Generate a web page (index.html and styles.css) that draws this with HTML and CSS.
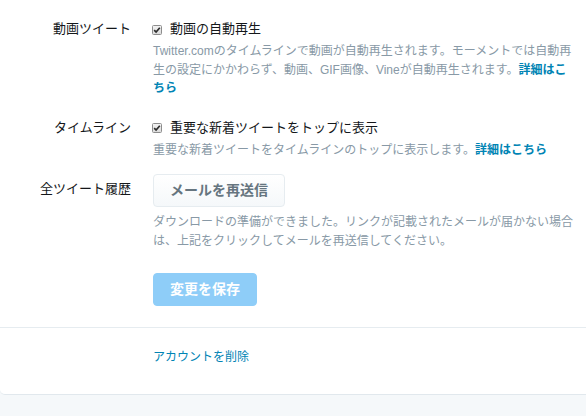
FILE: index.html
```html
<!DOCTYPE html>
<html lang="ja">
<head>
<meta charset="utf-8">
<title>設定</title>
<link rel="stylesheet" href="styles.css">
</head>
<body>
<div class="card">
  <div class="form">
    <div class="row">
      <div class="label">動画ツイート</div>
      <div class="control">
        <label class="check"><span class="box"><svg width="8" height="8" viewBox="0 0 8 8"><path d="M1.2 4.1 L3.1 6 L6.8 1.8" fill="none" stroke="#2b2b2b" stroke-width="1.7"/></svg></span>動画の自動再生</label>
        <p class="note">Twitter.comのタイムラインで動画が自動再生されます。モーメントでは自動再生の設定にかかわらず、動画、GIF画像、Vineが自動再生されます。<a href="#" class="more">詳細はこ</a><br><a href="#" class="more">ちら</a></p>
      </div>
    </div>
    <div class="row">
      <div class="label">タイムライン</div>
      <div class="control">
        <label class="check"><span class="box"><svg width="8" height="8" viewBox="0 0 8 8"><path d="M1.2 4.1 L3.1 6 L6.8 1.8" fill="none" stroke="#2b2b2b" stroke-width="1.7"/></svg></span>重要な新着ツイートをトップに表示</label>
        <p class="note">重要な新着ツイートをタイムラインのトップに表示します。<a href="#" class="more">詳細はこちら</a></p>
      </div>
    </div>
    <div class="row row-archive">
      <div class="label label-btn">全ツイート履歴</div>
      <div class="control">
        <button class="btn">メールを再送信</button>
        <p class="note note-archive">ダウンロードの準備ができました。リンクが記載されたメールが届かない場合は、上記をクリックしてメールを再送信してください。</p>
      </div>
    </div>
    <div class="row row-save">
      <div class="label"></div>
      <div class="control">
        <button class="btn-primary">変更を保存</button>
      </div>
    </div>
  </div>
  <div class="footer">
    <div class="row">
      <div class="label"></div>
      <div class="control"><a href="#" class="delete">アカウントを削除</a></div>
    </div>
  </div>
</div>
</body>
</html>
```
FILE: styles.css
```css
html, body {
  margin: 0;
  padding: 0;
  overflow: hidden;
}
body {
  background: #f5f8fa;
  font-family: "Liberation Sans", "Noto Sans CJK JP", sans-serif;
  color: #14171a;
  width: 586px;
  height: 416px;
}
.card {
  background: #fff;
  border-bottom: 1px solid #e1e8ed;
  border-radius: 0 0 5px 5px;
  margin-right: -4px;
}
.form {
  padding: 19px 0 21px;
}
.row {
  display: grid;
  grid-template-columns: 131px 427px;
  column-gap: 22px;
}
.row + .row {
  margin-top: 20px;
}
.row-archive {
  margin-top: 15px !important;
}
.row-save {
  margin-top: 23px !important;
}
.label {
  font-size: 13px;
  line-height: 20px;
  text-align: right;
  color: #14171a;
}
.label-btn {
  margin-top: 5px;
}
.check {
  display: flex;
  align-items: center;
  font-size: 13px;
  line-height: 20px;
  color: #14171a;
}
.box {
  width: 8px;
  height: 8px;
  border: 1px solid #8d8d8d;
  border-radius: 1.5px;
  background: linear-gradient(#f2f2f2, #dcdcdc);
  margin: 1px 8px 0 -1px;
  display: flex;
  align-items: center;
  justify-content: center;
}
.box svg {
  display: block;
}
.note {
  margin: 3px 0 0;
  font-size: 12px;
  line-height: 18.5px;
  color: #8899a6;
}
.note-archive {
  margin-top: 6px;
}
.more {
  color: #0084b4;
  font-weight: bold;
  text-decoration: none;
}
.btn {
  display: block;
  height: 33px;
  padding: 0 16px;
  border: 1px solid #e6ecf0;
  border-radius: 4px;
  background: linear-gradient(#ffffff, #f5f8fa);
  color: #66757f;
  font-family: inherit;
  font-size: 14px;
  font-weight: bold;
  line-height: 31px;
}
.btn-primary {
  display: block;
  height: 33px;
  padding: 0 16px;
  border: 1px solid #8ecdf8;
  border-radius: 4px;
  background: #8ecdf8;
  color: #fff;
  font-family: inherit;
  font-size: 14px;
  font-weight: bold;
  line-height: 31px;
}
.footer {
  border-top: 1px solid #e6ecf0;
  padding: 20px 0 28px;
}
.delete {
  display: block;
  font-size: 12px;
  line-height: 18px;
  color: #0084b4;
  text-decoration: none;
}
```
